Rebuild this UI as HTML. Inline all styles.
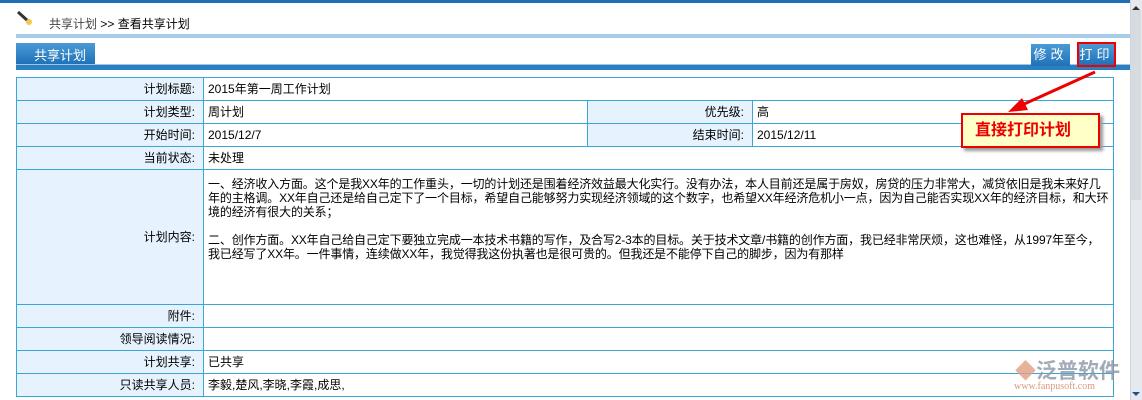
<!DOCTYPE html>
<html><head><meta charset="utf-8"><style>
*{margin:0;padding:0;box-sizing:border-box}
body{width:1142px;height:400px;overflow:hidden;background:#fff;font-family:"Liberation Sans","Noto Sans CJK SC","WenQuanYi Zen Hei",sans-serif;font-size:12px;color:#000;position:relative}
.abs{position:absolute}
table{border-collapse:collapse;position:absolute;left:16px;top:77px;width:1098px;table-layout:fixed}
td{border:1px solid #3aa6d8;height:23px;padding:0 4px;vertical-align:middle;line-height:14px}
td.l{background:#e6f2fd;text-align:right;padding-right:8px}
</style></head><body>
<div class="abs" style="left:0;top:0;width:1130px;height:3px;background:#1f6fb5"></div>
<div class="abs" style="left:1130px;top:0;width:12px;height:400px;background:#e6e9ee;border-left:1px solid #d0d4da"></div>
<div class="abs" style="left:1132px;top:6px;width:0;height:0;border-left:4px solid transparent;border-right:4px solid transparent;border-bottom:4px solid #333"></div>
<div class="abs" style="left:1131px;top:10px;width:10px;height:190px;background:#d6dbe2"></div>
<div class="abs" style="left:1132px;top:392px;width:0;height:0;border-left:4px solid transparent;border-right:4px solid transparent;border-top:4px solid #1f4f9a"></div>
<svg class="abs" style="left:16px;top:10px" width="18" height="16"><line x1="2" y1="2" x2="12" y2="11" stroke="#333" stroke-width="3"/><circle cx="13" cy="12" r="3" fill="#f2c94c"/></svg>
<div class="abs" style="left:49px;top:15px;color:#444">共享计划 <span style="color:#000">&gt;&gt; 查看共享计划</span></div>
<div class="abs" style="left:16px;top:34px;width:1114px;height:4px;background:#a8cdea"></div>
<div class="abs" style="left:16px;top:43px;width:79px;height:21px;background:linear-gradient(#4a9ad6,#1f72b8);color:#fff;font-size:13px;padding:2px 0 0 18px">共享计划</div>
<div class="abs" style="left:16px;top:64px;width:1114px;height:6px;background:#2a7fc1;border-top:1px solid #9cc6e6"></div>
<div class="abs" style="left:1031px;top:44px;width:39px;height:22px;background:linear-gradient(#4a9ad6,#1f72b8);color:#fff;font-size:13px;text-align:center;line-height:22px;letter-spacing:4px">修改</div>
<div class="abs" style="left:1077px;top:42px;width:39px;height:25px;background:linear-gradient(#4a9ad6,#1f72b8);color:#fff;font-size:13px;text-align:center;line-height:22px;letter-spacing:4px;border:2px solid #e00">打印</div>
<table>
<colgroup><col style="width:187px"><col style="width:384px"><col style="width:165px"><col></colgroup>
<tr><td class="l">计划标题:</td><td colspan="3">2015年第一周工作计划</td></tr>
<tr><td class="l">计划类型:</td><td>周计划</td><td class="l">优先级:</td><td>高</td></tr>
<tr><td class="l">开始时间:</td><td>2015/12/7</td><td class="l">结束时间:</td><td>2015/12/11</td></tr>
<tr><td class="l">当前状态:</td><td colspan="3">未处理</td></tr>
<tr><td class="l" style="height:135px">计划内容:</td><td colspan="3" style="vertical-align:top;padding-top:7px;letter-spacing:-0.15px">一、经济收入方面。这个是我XX年的工作重头，一切的计划还是围着经济效益最大化实行。没有办法，本人目前还是属于房奴，房贷的压力非常大，减贷依旧是我未来好几年的主格调。XX年自己还是给自己定下了一个目标，希望自己能够努力实现经济领域的这个数字，也希望XX年经济危机小一点，因为自己能否实现XX年的经济目标，和大环境的经济有很大的关系；<br><br>二、创作方面。XX年自己给自己定下要独立完成一本技术书籍的写作，及合写2-3本的目标。关于技术文章/书籍的创作方面，我已经非常厌烦，这也难怪，从1997年至今，我已经写了XX年。一件事情，连续做XX年，我觉得我这份执著也是很可贵的。但我还是不能停下自己的脚步，因为有那样</td></tr>
<tr><td class="l">附件:</td><td colspan="3"></td></tr>
<tr><td class="l">领导阅读情况:</td><td colspan="3"></td></tr>
<tr><td class="l">计划共享:</td><td colspan="3">已共享</td></tr>
<tr><td class="l">只读共享人员:</td><td colspan="3">李毅,楚风,李晓,李霞,成思,</td></tr>
</table>
<svg class="abs" style="left:0;top:0" width="1142" height="400"><line x1="1095" y1="72" x2="1022" y2="105" stroke="#e00" stroke-width="3"/><polygon points="1008,112 1022,98 1028,110" fill="#e00"/></svg>
<div class="abs" style="left:961px;top:113px;width:139px;height:35px;background:#ffffc8;border:2px solid #e00;box-shadow:3px 3px 3px #999;color:#e00;font-weight:bold;font-size:16px;line-height:31px;padding-left:12px">直接打印计划</div>
<div class="abs" style="left:1015px;top:355px;font-size:21px;color:#8a96a8;font-weight:bold;opacity:0.8"><span style="color:#e0a080">◆</span>泛普软件</div>
<div class="abs" style="left:1014px;top:381px;font-size:10px;color:#d08060;font-family:'Liberation Serif',serif;opacity:0.8">www.fanpusoft.com</div>
</body></html>
